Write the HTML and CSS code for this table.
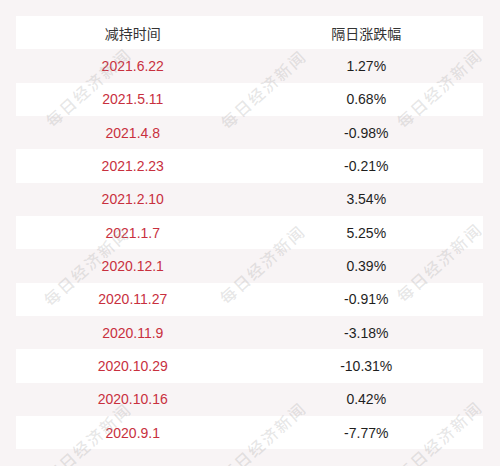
FILE: index.html
```html
<!DOCTYPE html>
<html lang="zh">
<head>
<meta charset="utf-8">
<link rel="stylesheet" href="styles.css">
</head>
<body>
<div class="page">
  <div class="table">
    <div class="row head"><div class="cell">减持时间</div><div class="cell">隔日涨跌幅</div></div>
    <div class="row"><div class="cell date">2021.6.22</div><div class="cell">1.27%</div></div>
    <div class="row alt"><div class="cell date">2021.5.11</div><div class="cell">0.68%</div></div>
    <div class="row"><div class="cell date">2021.4.8</div><div class="cell">-0.98%</div></div>
    <div class="row alt"><div class="cell date">2021.2.23</div><div class="cell">-0.21%</div></div>
    <div class="row"><div class="cell date">2021.2.10</div><div class="cell">3.54%</div></div>
    <div class="row alt"><div class="cell date">2021.1.7</div><div class="cell">5.25%</div></div>
    <div class="row"><div class="cell date">2020.12.1</div><div class="cell">0.39%</div></div>
    <div class="row alt"><div class="cell date">2020.11.27</div><div class="cell">-0.91%</div></div>
    <div class="row"><div class="cell date">2020.11.9</div><div class="cell">-3.18%</div></div>
    <div class="row alt"><div class="cell date">2020.10.29</div><div class="cell">-10.31%</div></div>
    <div class="row"><div class="cell date">2020.10.16</div><div class="cell">0.42%</div></div>
    <div class="row alt"><div class="cell date">2020.9.1</div><div class="cell">-7.77%</div></div>
  </div>
  <div class="wm w1">每日经济新闻</div>
  <div class="wm w2">每日经济新闻</div>
  <div class="wm w3">每日经济新闻</div>
  <div class="wm w4">每日经济新闻</div>
  <div class="wm w5">每日经济新闻</div>
  <div class="wm w6">每日经济新闻</div>
  <div class="wm w7">每日经济新闻</div>
  <div class="wm w8">每日经济新闻</div>
  <div class="wm w9">每日经济新闻</div>
</div>
</body>
</html>
```

FILE: styles.css
```css
html, body {
  margin: 0;
  padding: 0;
  background: #f8f4f5;
}
.page {
  position: relative;
  width: 500px;
  height: 466px;
  overflow: hidden;
  padding: 16px 17px 0 16px;
  box-sizing: border-box;
  font-family: "Liberation Sans", "Noto Sans CJK SC", sans-serif;
  font-size: 14px;
  color: #1e1e1e;
}
.table {
  display: flex;
  flex-direction: column;
}
.row {
  display: grid;
  grid-template-columns: 1fr 1fr;
  height: 33.33px;
}
.row.head, .row.alt {
  background: #ffffff;
}
.cell {
  display: flex;
  align-items: center;
  justify-content: center;
}
.head .cell {
  font-family: "Noto Sans CJK SC", sans-serif;
  color: #333333;
}
.date {
  color: #c8303e;
}
.wm {
  position: absolute;
  font-family: "Noto Sans CJK SC", sans-serif;
  font-weight: 500;
  font-size: 16px;
  letter-spacing: 2px;
  color: rgba(160, 160, 160, 0.26);
  white-space: nowrap;
  width: 120px;
  text-align: center;
  transform: translate(-50%, -50%) rotate(-42deg);
  pointer-events: none;
}
.w1 { left: 88px; top: 87px; }
.w2 { left: 263px; top: 89px; }
.w3 { left: 439px; top: 88px; }
.w4 { left: 86px; top: 266px; }
.w5 { left: 262px; top: 264px; }
.w6 { left: 439px; top: 262px; }
.w7 { left: 88px; top: 442px; }
.w8 { left: 263px; top: 441px; }
.w9 { left: 439px; top: 440px; }
```
